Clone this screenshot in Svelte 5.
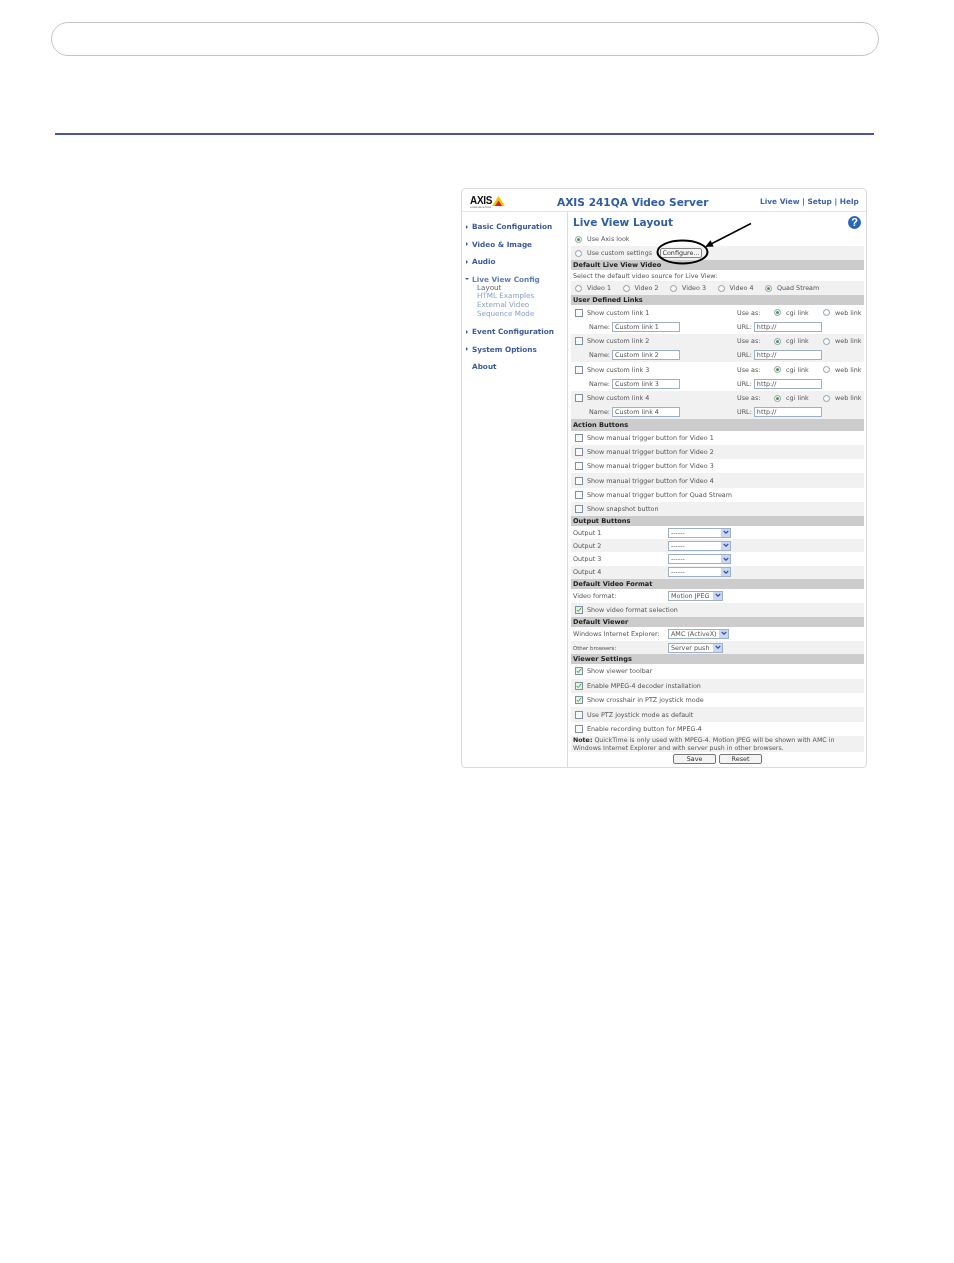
<script>
    const nav = ["Basic Configuration", "Video & Image", "Audio"]
    const nav2 = ["Event Configuration", "System Options"]
    const videos = ["Video 1", "Video 2", "Video 3", "Video 4", "Quad Stream"]
    const links = [1, 2, 3, 4]
    const actions = [
        "Show manual trigger button for Video 1",
        "Show manual trigger button for Video 2",
        "Show manual trigger button for Video 3",
        "Show manual trigger button for Video 4",
        "Show manual trigger button for Quad Stream",
        "Show snapshot button"
    ]
    const viewer = [
        { label: "Show viewer toolbar", on: true },
        { label: "Enable MPEG-4 decoder installation", on: true },
        { label: "Show crosshair in PTZ joystick mode", on: true },
        { label: "Use PTZ joystick mode as default", on: false },
        { label: "Enable recording button for MPEG-4", on: false }
    ]
</script>

{#snippet radio(on)}
    <span class="radio">{#if on}<i></i>{/if}</span>
{/snippet}

{#snippet check(on)}
    <span class="check" class:on>
        {#if on}
            <svg viewBox="0 0 8 8" width="6" height="6"><path d="M1 4l2 2 4-5" fill="none" stroke="#3f9a3f" stroke-width="1.3" /></svg>
        {/if}
    </span>
{/snippet}

{#snippet select(text, width)}
    <span class="select" style="width: {width}px">
        <span class="select-text">{text}</span>
        <span class="select-arrow">
            <svg viewBox="0 0 8 6" width="6" height="5"><path d="M1 1l3 3 3-3" fill="none" stroke="#2f4f9f" stroke-width="1.6" /></svg>
        </span>
    </span>
{/snippet}

<div class="page">
    <div class="pill"></div>
    <div class="rule"></div>

    <div class="card">
        <div class="blurred">
            <header class="top">
                <div class="logo">
                    <div class="logo-line">
                        <span class="logo-word">AXIS</span>
                        <svg viewBox="0 0 14 11" width="13" height="10"><path d="M7 0l7 11H0z" fill="#f5c400" /><path d="M7 5l4 6H3z" fill="#d8211c" /></svg>
                    </div>
                    <span class="logo-sub">COMMUNICATIONS</span>
                </div>
                <div class="product">AXIS 241QA Video Server</div>
                <nav class="toplinks">Live View | Setup | Help</nav>
            </header>

            <div class="body">
                <aside class="side">
                    {#each nav as item}
                        <div class="nav-item"><span class="tri"></span>{item}</div>
                    {/each}
                    <div class="nav-item open"><span class="tri down"></span>Live View Config</div>
                    <div class="sub current">Layout</div>
                    <div class="sub">HTML Examples</div>
                    <div class="sub">External Video</div>
                    <div class="sub last">Sequence Mode</div>
                    {#each nav2 as item}
                        <div class="nav-item after"><span class="tri"></span>{item}</div>
                    {/each}
                    <div class="nav-item after"><span class="tri none"></span>About</div>
                </aside>

                <main class="main">
                    <div class="title-row">
                        <h1>Live View Layout</h1>
                        <span class="help">?</span>
                    </div>

                    <div class="row ind">{@render radio(true)}<span>Use Axis look</span></div>
                    <div class="row ind alt">
                        {@render radio(false)}<span>Use custom settings</span>
                        <span class="configure">Configure...</span>
                    </div>

                    <div class="sec">Default Live View Video</div>
                    <div class="row small">Select the default video source for Live View:</div>
                    <div class="row ind alt">
                        {#each videos as v, i}
                            <span class="video-cell">{@render radio(i === 4)}<span>{v}</span></span>
                        {/each}
                    </div>

                    <div class="sec">User Defined Links</div>
                    {#each links as n}
                        <div class="link" class:alt={n % 2 === 0}>
                            <div class="link-line">
                                <span class="link-left">{@render check(false)}<span>Show custom link {n}</span></span>
                                <span class="use-as">Use as:</span>
                                <span class="opt">{@render radio(true)}<span>cgi link</span></span>
                                <span class="opt">{@render radio(false)}<span>web link</span></span>
                            </div>
                            <div class="link-line">
                                <span class="link-left name">Name: <span class="input">Custom link {n}</span></span>
                                <span class="url">URL: <span class="input">http://</span></span>
                            </div>
                        </div>
                    {/each}

                    <div class="sec tall">Action Buttons</div>
                    {#each actions as a, i}
                        <div class="row ind act" class:alt={i % 2 === 1}>{@render check(false)}<span>{a}</span></div>
                    {/each}

                    <div class="sec">Output Buttons</div>
                    {#each links as n}
                        <div class="row out" class:alt={n % 2 === 0}>
                            <span class="out-label">Output {n}</span>
                            {@render select("------", 63)}
                        </div>
                    {/each}

                    <div class="sec">Default Video Format</div>
                    <div class="row">
                        <span class="out-label">Video format:</span>
                        {@render select("Motion JPEG", 55)}
                    </div>
                    <div class="row ind alt">{@render check(true)}<span>Show video format selection</span></div>

                    <div class="sec">Default Viewer</div>
                    <div class="row">
                        <span class="out-label">Windows Internet Explorer:</span>
                        {@render select("AMC (ActiveX)", 61)}
                    </div>
                    <div class="row out alt">
                        <span class="out-label tiny">Other browsers:</span>
                        {@render select("Server push", 55)}
                    </div>

                    <div class="sec">Viewer Settings</div>
                    {#each viewer as v, i}
                        <div class="row ind view" class:alt={i % 2 === 1}>{@render check(v.on)}<span>{v.label}</span></div>
                    {/each}

                    <div class="note"><b>Note:</b> QuickTime is only used with MPEG-4. Motion JPEG will be shown with AMC in<br />Windows Internet Explorer and with server push in other browsers.</div>
                    <div class="buttons">
                        <span class="btn">Save</span>
                        <span class="btn">Reset</span>
                    </div>
                </main>
            </div>
        </div>

        <svg class="callout" viewBox="0 0 100 50" width="100" height="50">
            <ellipse cx="26.5" cy="30" rx="25" ry="11.5" fill="none" stroke="#000" stroke-width="2" />
            <path d="M95 1.500L55 22" stroke="#000" stroke-width="1.500" fill="none" />
            <path d="M49 25l8.700-0.500-3.200-6.200z" fill="#000" />
        </svg>
    </div>
</div>

<style>
    :global(body) {
        background: #fff;
    }

    .page {
        width: 954px;
        height: 1263px;
        overflow: hidden;
        padding-top: 22px;
        box-sizing: border-box;
        font-family: "DejaVu Sans", sans-serif;
    }

    .pill {
        width: 828px;
        height: 34px;
        margin-left: 51px;
        box-sizing: border-box;
        border: 1px solid #c4c4c4;
        border-radius: 17px;
    }

    .rule {
        width: 819px;
        height: 2px;
        margin: 77px 0 0 55px;
        background: #4b559b;
    }

    .card {
        position: relative;
        width: 406px;
        height: 580px;
        margin: 53px 0 0 461px;
        box-sizing: border-box;
        border: 1px solid #dcdcdc;
        border-radius: 4px;
        font-size: 6.400px;
        color: #555;
    }

    .blurred {
        filter: blur(0.4px);
    }

    .top {
        display: flex;
        align-items: center;
        height: 19px;
        padding-top: 3px;
        border-bottom: 1px solid #e4e4e4;
    }

    .logo {
        width: 95px;
        padding-left: 8px;
        box-sizing: border-box;
        display: flex;
        flex-direction: column;
    }

    .logo-line {
        display: flex;
        align-items: flex-end;
        height: 10px;
    }

    .logo-word {
        font-family: "Liberation Sans", sans-serif;
        font-weight: bold;
        font-size: 10px;
        line-height: 10px;
        color: #111;
        letter-spacing: -0.3px;
    }

    .logo-sub {
        font-size: 2px;
        line-height: 2px;
        color: #333;
        letter-spacing: 0.2px;
    }

    .product {
        width: 203px;
        font-size: 10.600px;
        font-weight: bold;
        color: #2f5ea8;
        white-space: nowrap;
    }

    .toplinks {
        font-size: 7.400px;
        font-weight: bold;
        color: #3f64a8;
        white-space: nowrap;
    }

    .body {
        display: flex;
        height: 555px;
    }

    .side {
        width: 106px;
        box-sizing: border-box;
        padding-top: 10px;
        border-right: 1px solid #dcdcdc;
        font-size: 7.300px;
    }

    .nav-item {
        height: 9px;
        line-height: 9px;
        margin-bottom: 8.600px;
        display: flex;
        align-items: center;
        color: #3c5a9c;
        font-weight: bold;
        white-space: nowrap;
    }

    .nav-item.open {
        margin-bottom: 0;
        color: #5f7fbb;
    }

    .nav-item.after {
        margin-bottom: 8.600px;
    }

    .tri {
        width: 0;
        height: 0;
        margin: 0 4px 0 4px;
        border-left: 2.500px solid #3c5a9c;
        border-top: 2px solid transparent;
        border-bottom: 2px solid transparent;
    }

    .tri.down {
        margin: 0 3px 0 3px;
        border-top: 2.500px solid #3c5a9c;
        border-left: 2px solid transparent;
        border-right: 2px solid transparent;
        border-bottom: 0;
    }

    .tri.none {
        border-left-color: transparent;
    }

    .sub {
        height: 8.700px;
        line-height: 8.700px;
        padding-left: 15px;
        font-size: 7.200px;
        color: #86a0cc;
        white-space: nowrap;
    }

    .sub.current {
        color: #666;
    }

    .sub.last {
        margin-bottom: 8.500px;
    }

    .main {
        width: 293px;
        margin-left: 3px;
    }

    .title-row {
        display: flex;
        justify-content: space-between;
        align-items: center;
        height: 20px;
        padding: 0 3px 0 2px;
    }

    h1 {
        margin: 0;
        font-size: 10.500px;
        font-weight: bold;
        color: #2f5ea8;
    }

    .help {
        width: 13px;
        height: 13px;
        border-radius: 50%;
        background: #2a66b8;
        color: #fff;
        font: bold 11px/13px "Liberation Sans", sans-serif;
        text-align: center;
    }

    .row {
        display: flex;
        align-items: center;
        height: 14px;
        padding-left: 2px;
        white-space: nowrap;
    }

    .row.small {
        height: 11px;
    }

    .row.ind {
        padding-left: 4px;
    }

    .row.act {
        height: 14.170px;
    }

    .row.out {
        height: 13.250px;
    }

    .row.view {
        height: 14.400px;
    }

    .alt {
        background: #f1f1f1;
    }

    .sec {
        height: 10px;
        line-height: 10px;
        padding-left: 2px;
        background: #cccccc;
        color: #222;
        font-size: 6.600px;
        font-weight: bold;
        white-space: nowrap;
    }

    .sec.tall {
        height: 12px;
        line-height: 12px;
    }

    .radio {
        flex: none;
        width: 7px;
        height: 7px;
        margin-right: 5px;
        box-sizing: border-box;
        border: 1px solid #8a9aaa;
        border-radius: 50%;
        background: #fff;
        display: flex;
        align-items: center;
        justify-content: center;
    }

    .radio i {
        width: 3px;
        height: 3px;
        border-radius: 50%;
        background: #3f9a3f;
    }

    .check {
        flex: none;
        width: 8px;
        height: 8px;
        margin-right: 4px;
        box-sizing: border-box;
        border: 1px solid #7f8f9f;
        background: #fbfbfb;
        display: flex;
        align-items: center;
        justify-content: center;
    }

    .check.on {
        background: #e6f2e6;
    }

    .configure {
        height: 10px;
        width: 42px;
        line-height: 9px;
        margin-left: 8px;
        box-sizing: border-box;
        border: 1px solid #888;
        border-radius: 2px;
        background: #f6f6f6;
        color: #333;
        text-align: center;
    }

    .video-cell {
        display: flex;
        align-items: center;
        width: 47.500px;
    }

    .link {
        height: 28.500px;
        box-sizing: border-box;
        padding-top: 0.500px;
        white-space: nowrap;
    }

    .link-line {
        display: flex;
        align-items: center;
        height: 14px;
    }

    .link-left {
        flex: none;
        display: flex;
        align-items: center;
        width: 166px;
        padding-left: 4px;
        box-sizing: border-box;
    }

    .link-left.name {
        padding-left: 18px;
        gap: 2px;
    }

    .use-as {
        flex: none;
        width: 37px;
        margin-left: 0;
    }

    .opt {
        flex: none;
        display: flex;
        align-items: center;
        width: 49px;
    }

    .url {
        display: flex;
        align-items: center;
        gap: 2px;
    }

    .input {
        display: block;
        box-sizing: border-box;
        width: 68px;
        height: 10px;
        line-height: 8px;
        padding-left: 2px;
        border: 1px solid #9fb0c4;
        background: #fff;
        color: #555;
    }

    .out-label {
        width: 95px;
    }

    .out-label.tiny {
        font-size: 5.400px;
    }

    .select {
        display: flex;
        align-items: center;
        justify-content: space-between;
        box-sizing: border-box;
        height: 10px;
        border: 1px solid #9fb0c4;
        background: #fff;
    }

    .select-text {
        padding-left: 2px;
    }

    .select-arrow {
        display: flex;
        align-items: center;
        justify-content: center;
        width: 9px;
        height: 8px;
        background: #c9d8f2;
    }

    .note {
        height: 16px;
        line-height: 7.500px;
        padding: 0 2px;
        background: #f1f1f1;
        font-size: 6.300px;
        white-space: nowrap;
    }

    .note b {
        color: #222;
    }

    .buttons {
        display: flex;
        justify-content: center;
        gap: 3px;
        padding-top: 2px;
    }

    .btn {
        width: 43px;
        height: 10px;
        line-height: 8px;
        box-sizing: border-box;
        border: 1px solid #777;
        border-radius: 2px;
        background: #f4f4f4;
        text-align: center;
        color: #333;
    }

    .callout {
        position: absolute;
        left: 194px;
        top: 33px;
    }
</style>
